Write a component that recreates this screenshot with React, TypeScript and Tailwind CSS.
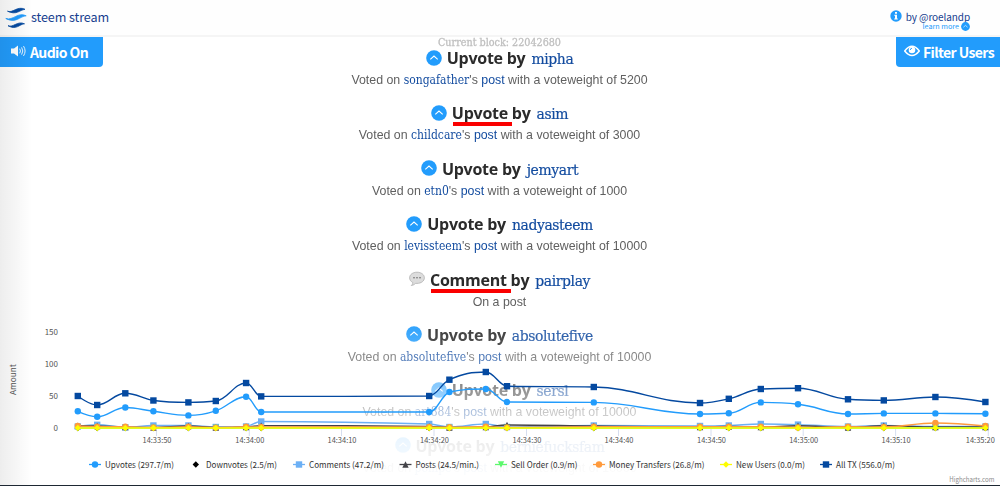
import { clsx } from "clsx";

type Pt = [number, number];

const SANS = "font-['Noto_Sans_CJK_SC',sans-serif]";
const SERIF = "font-['DejaVu_Serif_Condensed','DejaVu_Serif',serif] [font-stretch:condensed]";

const feed = [
    { type: "Upvote", user: "mipha", author: "songafather", weight: 5200 },
    { type: "Upvote", user: "asim", author: "childcare", weight: 3000, marked: true },
    { type: "Upvote", user: "jemyart", author: "etn0", weight: 1000 },
    { type: "Upvote", user: "nadyasteem", author: "levissteem", weight: 10000 },
    { type: "Comment", user: "pairplay", marked: true },
    { type: "Upvote", user: "absolutefive", author: "absolutefive", weight: 10000 },
    { type: "Upvote", user: "sersl", author: "art884", weight: 10000 },
    { type: "Upvote", user: "berniefucksfam", author: "pompe", weight: 10000 },
];

const xs = [77.8, 97.2, 125.3, 153.4, 188.4, 215.8, 246.1, 261.2, 429.2, 449.4, 485.8, 507, 593.8, 700, 728.8, 760.8, 798, 848, 883.8, 935.4, 985.4];

const series = [
    { name: "Upvotes (297.7/m)", color: "#229cfc", shape: "circle", lx: 95, tx: 105, w: 69, ys: [411.3, 416.7, 407.5, 411.3, 415.4, 410.8, 396.7, 412, 412, 392, 389, 402, 402.4, 414, 413.3, 402.4, 404.3, 414, 413.4, 413.4, 413.7] },
    { name: "Downvotes (2.5/m)", color: "#000000", shape: "diamond", lx: 195.8, tx: 206, w: 71, ys: xs.map(() => 428) },
    { name: "Comments (47.2/m)", color: "#6cb0f5", shape: "square", lx: 299, tx: 309, w: 75, ys: [426.5, 424.8, 427.3, 425.5, 425.5, 427, 426.5, 421.5, 424, 427, 424, 427, 425.5, 426, 425.5, 424, 424.6, 426.5, 425.5, 426.5, 426.5] },
    { name: "Posts (24.5/min.)", color: "#434348", shape: "triangle", lx: 405.5, tx: 415.5, w: 63.5, ys: [425.6, 426, 427, 427.5, 426, 427.5, 427, 425.6, 426.5, 427.5, 427, 425, 426, 427, 426.5, 427, 425.8, 427.5, 425.8, 427, 427] },
    { name: "Sell Order (0.9/m)", color: "#5cf86c", shape: "triangle-down", lx: 501, tx: 511, w: 66.5, ys: xs.map(() => 428) },
    { name: "Money Transfers (26.8/m)", color: "#ff9a3c", shape: "circle", lx: 599, tx: 609, w: 95.5, ys: [426, 426.6, 426.8, 427.4, 426.8, 427.6, 426.8, 427, 427, 427.2, 426.8, 427.4, 426.8, 426.6, 426.6, 426.6, 427.4, 426.8, 427, 423, 426] },
    { name: "New Users (0.0/m)", color: "#fdfd00", shape: "diamond", lx: 726, tx: 736, w: 69, ys: xs.map(() => 428) },
    { name: "All TX (556.0/m)", color: "#0449a0", shape: "square", lx: 826, tx: 836, w: 59, ys: [396, 405, 393.3, 400.5, 402.4, 401, 383, 396.4, 396, 379.7, 372, 386.2, 387, 403, 398.8, 389, 388.2, 399.3, 400.4, 397, 402] },
];

const ticks = [
    [156.5, "14:33:50"],
    [249.3, "14:34:00"],
    [341.5, "14:34:10"],
    [434, "14:34:20"],
    [526.5, "14:34:30"],
    [618.5, "14:34:40"],
    [711, "14:34:50"],
    [803.2, "14:35:00"],
    [895.6, "14:35:10"],
    [988.3, "14:35:20"],
] as [number, string][];

// smooth line that never overshoots its neighbours
function spline(pts: Pt[]) {
    let d = `M${pts[0][0]} ${pts[0][1]}`;
    let right: Pt = pts[0];
    for (let i = 1; i < pts.length; i++) {
        const [x, y] = pts[i];
        const last = pts[i - 1];
        const next = pts[i + 1];
        let left: Pt = [x, y];
        let nextRight: Pt = [x, y];
        if (next) {
            const lx = (1.5 * x + last[0]) / 2.5;
            let ly = (1.5 * y + last[1]) / 2.5;
            const rx = (1.5 * x + next[0]) / 2.5;
            let ry = (1.5 * y + next[1]) / 2.5;
            const fix = ((ry - ly) * (rx - x)) / (rx - lx) + y - ry;
            ly += fix;
            ry += fix;
            if (ly > last[1] && ly > y) {
                ly = Math.max(last[1], y);
                ry = 2 * y - ly;
            } else if (ly < last[1] && ly < y) {
                ly = Math.min(last[1], y);
                ry = 2 * y - ly;
            }
            if (ry > next[1] && ry > y) {
                ry = Math.max(next[1], y);
                ly = 2 * y - ry;
            } else if (ry < next[1] && ry < y) {
                ry = Math.min(next[1], y);
                ly = 2 * y - ry;
            }
            left = [lx, ly];
            nextRight = [rx, ry];
        }
        d += `C${right[0]} ${right[1]} ${left[0]} ${left[1]} ${x} ${y}`;
        right = nextRight;
    }
    return d;
}

function Marker({ shape, x, y, color }: { shape: string; x: number; y: number; color: string }) {
    const r = 3.2;
    if (shape === "circle") return <circle cx={x} cy={y} r={r} fill={color} />;
    if (shape === "square") return <rect x={x - r} y={y - r} width={r * 2} height={r * 2} fill={color} />;
    if (shape === "diamond") return <path d={`M${x} ${y - r}L${x + r} ${y}L${x} ${y + r}L${x - r} ${y}Z`} fill={color} />;
    if (shape === "triangle") return <path d={`M${x} ${y - r}L${x + r} ${y + r}L${x - r} ${y + r}Z`} fill={color} />;
    return <path d={`M${x - r} ${y - r}L${x + r} ${y - r}L${x} ${y + r}Z`} fill={color} />;
}

function Chart() {
    return (
        <svg className={clsx("absolute inset-0", SANS)} width="1000" height="486" viewBox="0 0 1000 486">
            {ticks.map(([x]) => (
                <path key={x} d={`M${x} 429V436`} stroke="#ccd6eb" strokeWidth="0.8" />
            ))}
            {series.map((s) => (
                <g key={s.name}>
                    {s.name !== "Downvotes (2.5/m)" && (
                        <path d={spline(xs.map((x, i) => [x, s.ys[i]] as Pt))} fill="none" stroke={s.color} strokeWidth="1.4" />
                    )}
                    {xs.map((x, i) => (
                        <Marker key={x} shape={s.shape} x={x} y={s.ys[i]} color={s.color} />
                    ))}
                </g>
            ))}
            <g fontSize="8" fill="#555">
                {["150", "100", "50", "0"].map((v, i) => (
                    <text key={v} x="58" y={335 + i * 32.1} textAnchor="end">{v}</text>
                ))}
                {ticks.map(([x, label]) => (
                    <text key={label} x={Math.min(x + 0.5, 980.3) - 14.5} y="442.6" textLength="29" lengthAdjust="spacingAndGlyphs">{label}</text>
                ))}
                <text transform="translate(15.5 395) rotate(-90)" textLength="31" lengthAdjust="spacingAndGlyphs">Amount</text>
            </g>
            <g fontSize="8.4" fill="#333">
                {series.map((s) => (
                    <g key={s.name}>
                        {s.name !== "Downvotes (2.5/m)" && <path d={`M${s.lx - 6} 464.5h12`} stroke={s.color} strokeWidth="1.3" />}
                        <Marker shape={s.shape} x={s.lx} y={464.5} color={s.color} />
                        <text x={s.tx} y="467.5" textLength={s.w} lengthAdjust="spacingAndGlyphs">{s.name}</text>
                    </g>
                ))}
            </g>
            <text x="949.3" y="481.5" fontSize="7" fill="#8c8c8c" textLength="45.2" lengthAdjust="spacingAndGlyphs">Highcharts.com</text>
        </svg>
    );
}

function UpIcon({ className }: { className?: string }) {
    return (
        <svg className={className} viewBox="0 0 16 16">
            <circle cx="8" cy="8" r="7.8" fill="#229cfc" />
            <path d="M4.3 9.3L8 6L11.7 9.3" fill="none" stroke="#fff" strokeWidth="1.1" />
        </svg>
    );
}

function CommentIcon() {
    return (
        <svg className="mb-px size-4" viewBox="0 0 16 16">
            <path d="M8 1.2C3.8 1.2.6 3.6.6 6.8c0 2 1.2 3.7 3.2 4.7 0 1.200-.6 2.300-1.500 3 1.900-.2 3.400-1.100 4.300-2.200l1.400.1c4.200 0 7.400-2.400 7.400-5.600S12.200 1.200 8 1.200Z" fill="#dcdcdc" stroke="#a8a8a8" strokeWidth="0.7" />
            <g fill="#666">
                <circle cx="5" cy="6.7" r="0.8" />
                <circle cx="8" cy="6.7" r="0.8" />
                <circle cx="11" cy="6.7" r="0.8" />
            </g>
        </svg>
    );
}

export default function App() {
    return (
        <div className="relative h-[486px] w-[1000px] overflow-hidden bg-white">
            <header className={clsx("flex h-[37px] items-center justify-between border-b-2 border-[#f5f5f5] bg-[#fefefe] pl-[5px] pr-[30px] text-[#17408f]", SANS)}>
                <div className="flex items-center gap-1">
                    <svg className="h-[22px] w-[22px]" viewBox="0 0 22 22">
                        <path d="M2.500 4.200C7.500 6.500 12.500-1.500 20 2.300C14.500 3 11.500 8.500 2.500 4.200Z" fill="#0449a0" stroke="#0449a0" strokeWidth="0.8" />
                        <path d="M0.800 11.500C8 14 13 4.500 21.200 8.800C15 9 11 17 0.800 11.500Z" fill="#229cfc" stroke="#229cfc" strokeWidth="0.8" />
                        <path d="M3 18.700C8 21 12.500 13.500 19.500 16.800C14.500 17 11.500 23.500 3 18.700Z" fill="#0449a0" stroke="#0449a0" strokeWidth="0.8" />
                    </svg>
                    <span className="text-[12.6px] leading-none tracking-[-0.1px]">steem stream</span>
                </div>
                <div className="flex flex-col items-end pt-1.5">
                    <div className="flex items-center gap-1 text-[10px] leading-[11px] tracking-[-0.1px]">
                        <svg className="size-3" viewBox="0 0 12 12">
                            <circle cx="6" cy="6" r="5.700" fill="#229cfc" />
                            <path d="M5 2h2v1.700H5zM4.300 4.700H7v3.900h.8v1H4.200v-1H5V5.700h-.7z" fill="#fff" />
                        </svg>
                        by @roelandp
                    </div>
                    <div className="flex items-center gap-0.5 text-[7.2px] leading-[9px] text-[#229cfc]">
                        learn more <UpIcon className="size-[9px]" />
                    </div>
                </div>
            </header>

            <div className="flex h-[448px] items-start justify-between">
                <button className={clsx("flex h-[30px] w-[103px] items-center rounded-br-sm bg-[#229cfc] pl-[11px] text-[14px] font-bold tracking-[-0.6px] text-white", SANS)}>
                    <svg className="mb-[3px] mr-1 h-3 w-[15px]" viewBox="0 0 15 12">
                        <path d="M0 3.500h3L7 .5v11L3 8.500H0z" fill="#fff" />
                        <path d="M8.700 3.700q1.500 2.300 0 4.600M10.600 2.400q2.400 3.600 0 7.200M12.500 1.100q3.200 4.900 0 9.800" fill="none" stroke="#fff" strokeWidth="0.9" />
                    </svg>
                    Audio On
                </button>

                <main className="flex h-[448px] w-[500px] flex-col items-center overflow-hidden [mask-image:linear-gradient(#000_62%,rgba(0,0,0,0.75)_71%,rgba(0,0,0,0.38)_83%,rgba(0,0,0,0.09)_90%,rgba(0,0,0,0.03)_97%)]">
                    <p className={clsx("h-[11px] text-[10.7px] leading-[11px] text-[#bbbbbb] [-webkit-text-stroke:0.3px_#c4c4c4]", SERIF)}>Current block: 22042680</p>
                    {feed.map((item) => (
                        <article key={item.user} className="flex h-[55.4px] shrink-0 flex-col items-center whitespace-nowrap">
                            <h2 className="flex h-5 items-center text-[16px] leading-5 text-[#2b2b2b]">
                                {item.type === "Upvote" ? <UpIcon className="mb-px size-4" /> : <CommentIcon />}
                                <span className="ml-[5px] font-['Open_Sans',sans-serif] font-bold tracking-[-0.25px]">
                                    <span className="relative">
                                        {item.type}
                                        {item.marked && <span className="absolute -right-1 bottom-[-2px] left-px h-1 bg-[#fa0000]" />}
                                    </span>{" "}
                                    by
                                </span>
                                <span className={clsx("ml-1.5 mt-0.5 text-[15.5px] tracking-[-0.4px] text-[#124b9f] [-webkit-text-stroke:0.2px]", SERIF)}>{item.user}</span>
                            </h2>
                            <p className="mt-1 font-['Liberation_Sans',sans-serif] text-[12.36px] leading-4 text-[#606060]">
                                {item.author ? (
                                    <>
                                        Voted on <span className={clsx("text-[12px] text-[#124b9f]", SERIF)}>{item.author}</span>'s{" "}
                                        <span className="text-[#124b9f]">post</span> with a voteweight of {item.weight}
                                    </>
                                ) : (
                                    "On a post"
                                )}
                            </p>
                        </article>
                    ))}
                </main>

                <button className={clsx("flex h-[30px] w-[104px] items-center whitespace-nowrap rounded-bl-sm bg-[#229cfc] pl-2 text-[14px] font-bold tracking-[-0.6px] text-white", SANS)}>
                    <svg className="mb-[3px] mr-[3px] h-3 w-4" viewBox="0 0 16 12">
                        <path d="M.7 6Q8-3.500 15.300 6Q8 15 .7 6Z" fill="none" stroke="#fff" strokeWidth="1.500" />
                        <circle cx="8" cy="5" r="3.300" fill="#fff" />
                        <path d="M6.300 5Q6.300 3.300 8 3.300" fill="none" stroke="#229cfc" strokeWidth="0.9" />
                    </svg>
                    Filter Users
                </button>
            </div>

            <Chart />
            <div className="absolute inset-y-0 left-0 w-8 bg-linear-to-r from-black/7 to-transparent" />
            <footer className="absolute inset-x-0 bottom-0 h-px bg-[#1e2833]" />
        </div>
    );
}
